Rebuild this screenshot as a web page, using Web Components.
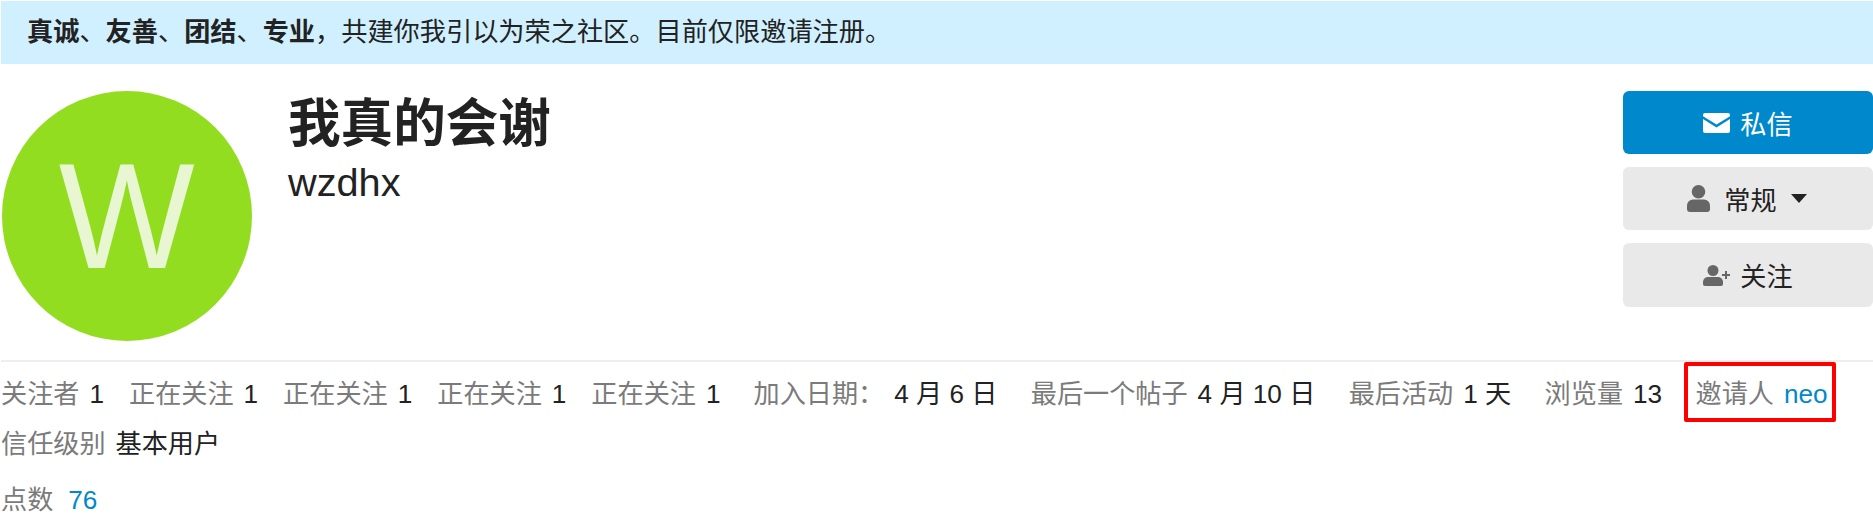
<!DOCTYPE html>
<html lang="zh">
<head>
<meta charset="utf-8">
<style>
  html, body { margin: 0; background: #fff; }
  body {
    width: 1873px;
    height: 524px;
    overflow: hidden;
    font-family: "Liberation Sans", "Noto Sans CJK SC", sans-serif;
    color: #222;
  }
</style>
</head>
<body>
<notice-banner><b>真诚</b>、<b>友善</b>、<b>团结</b>、<b>专业</b>，共建你我引以为荣之社区。目前仅限邀请注册。</notice-banner>
<user-header name="我真的会谢" username="wzdhx" letter="W"></user-header>
<user-stats></user-stats>

<script>
class NoticeBanner extends HTMLElement {
  constructor() {
    super();
    this.attachShadow({ mode: "open" });
    this.shadowRoot.innerHTML = `
      <style>
        :host {
          display: block;
          margin: 1px 0 0 1px;
          padding: 0 0 0 26px;
          height: 63px;
          line-height: 63px;
          background: #d1f0ff;
          font-size: 26.2px;
          color: #222;
        }
        ::slotted(b) { font-weight: bold; }
      </style>
      <slot></slot>`;
  }
}
customElements.define("notice-banner", NoticeBanner);

class ActionButton extends HTMLElement {
  constructor() {
    super();
    this.attachShadow({ mode: "open" });
    this.shadowRoot.innerHTML = `
      <style>
        :host {
          display: flex;
          align-items: center;
          justify-content: center;
          width: 250px;
          border-radius: 6px;
          background: #e9e9e9;
          color: #222;
          font-size: 26.15px;
          box-sizing: border-box;
        }
        :host([primary]) { background: #0088cc; color: #fff; }
        ::slotted(svg) { flex: none; }
      </style>
      <slot></slot>`;
  }
}
customElements.define("action-button", ActionButton);

class UserHeader extends HTMLElement {
  constructor() {
    super();
    this.attachShadow({ mode: "open" });
    this.shadowRoot.innerHTML = `
      <style>
        :host { display: flex; padding: 27px 0 0 2px; box-sizing: border-box; height: 296px; }
        .avatar {
          flex: none;
          width: 250px;
          height: 250px;
          border-radius: 50%;
          background: #92dd20;
          color: #e8f6d2;
          font-size: 150px;
          line-height: 250px;
          text-align: center;
        }
        .avatar span { display: inline-block; transform: scaleX(.96); }
        .names { flex: 1; padding: 0 0 0 36px; }
        h1 { margin: -2px 0 0; font-size: 52.6px; line-height: 70px; font-weight: bold; color: #222; }
        .username { font-size: 39.7px; line-height: 46px; color: #222; }
        .actions { flex: none; display: flex; flex-direction: column; gap: 13px; }
        .g { height: 63px; }
        .tall { height: 64px; }
        .lbl { margin-left: 10px; }
      </style>
      <div class="avatar"><span></span></div>
      <div class="names"><h1></h1><div class="username"></div></div>
      <div class="actions">
        <action-button primary class="g">
          <svg width="27" height="20" viewBox="0 0 27 20"><path fill="#fff" d="M2 0h23a2 2 0 0 1 2 2v1.200L13.500 11.600 0 3.200V2a2 2 0 0 1 2-2zM0 6l13.500 8.400L27 6v12a2 2 0 0 1-2 2H2a2 2 0 0 1-2-2z"/></svg>
          <span class="lbl">私信</span>
        </action-button>
        <action-button class="g">
          <svg width="23" height="27" viewBox="0 0 23 27"><circle cx="11.500" cy="6.800" r="6.800" fill="#666"/><path fill="#666" d="M6 14.500h11a6 6 0 0 1 6 6V24a3 3 0 0 1-3 3H3a3 3 0 0 1-3-3v-3.500a6 6 0 0 1 6-6z"/></svg>
          <span style="margin-left:14px">常规</span>
          <svg style="margin:0 2px 0 14px" width="16" height="9" viewBox="0 0 16 9"><path fill="#222" d="M0 0h16L8 9z"/></svg>
        </action-button>
        <action-button class="tall">
          <svg width="27" height="21" viewBox="0 0 27 21"><circle cx="10" cy="5.500" r="5.500" fill="#666"/><path fill="#666" d="M5 12h10a5 5 0 0 1 5 5v2a2 2 0 0 1-2 2H2a2 2 0 0 1-2-2v-2a5 5 0 0 1 5-5z"/><path fill="#666" d="M22 6h2v3h3v2h-3v3h-2v-3h-3V9h3z"/></svg>
          <span class="lbl">关注</span>
        </action-button>
      </div>`;
    this.shadowRoot.querySelector(".avatar span").textContent = this.getAttribute("letter");
    this.shadowRoot.querySelector("h1").textContent = this.getAttribute("name");
    this.shadowRoot.querySelector(".username").textContent = this.getAttribute("username");
  }
}
customElements.define("user-header", UserHeader);

class StatItem extends HTMLElement {
  constructor() {
    super();
    this.attachShadow({ mode: "open" });
    this.shadowRoot.innerHTML = `
      <style>
        :host { display: inline-flex; align-items: baseline; position: relative; gap: var(--item-gap, 10px); white-space: nowrap; line-height: 38px; }
        .k { color: #7b7b7b; }
        .v { color: #222; }
        :host([link]) .v { color: #0088cc; }
        :host([marked])::after {
          content: "";
          position: absolute;
          left: -12px;
          right: -8px;
          top: -13px;
          bottom: -9px;
          border: 4px solid #f00;
          border-radius: 2px;
        }
      </style>
      <span class="k"><slot name="k"></slot></span>
      <span class="v"><slot></slot></span>`;
  }
}
customElements.define("stat-item", StatItem);

class UserStats extends HTMLElement {
  constructor() {
    super();
    this.attachShadow({ mode: "open" });
    this.shadowRoot.innerHTML = `
      <style>
        :host {
          display: block;
          margin-left: 1px;
          border-top: 2px solid #eee;
          font-size: 26.15px;
          color: #222;
        }
        .row { display: flex; gap: 33px; }
        .group { display: flex; }
        .follow { gap: 25px; }
        .info { gap: 33.4px; }
        .r1 { margin-top: 13px; }
        .r2 { margin-top: 12px; }
        .r3 { margin-top: 18px; }
        .wide { --item-gap: 15px; }
      </style>
      <div class="row r1">
        <div class="group follow">
          <stat-item><span slot="k">关注者</span>1</stat-item>
          <stat-item><span slot="k">正在关注</span>1</stat-item>
          <stat-item><span slot="k">正在关注</span>1</stat-item>
          <stat-item><span slot="k">正在关注</span>1</stat-item>
          <stat-item><span slot="k">正在关注</span>1</stat-item>
        </div>
        <div class="group info">
          <stat-item><span slot="k">加入日期：</span>4 月 6 日</stat-item>
          <stat-item><span slot="k">最后一个帖子</span>4 月 10 日</stat-item>
          <stat-item><span slot="k">最后活动</span>1 天</stat-item>
          <stat-item><span slot="k">浏览量</span>13</stat-item>
          <stat-item link marked><span slot="k">邀请人</span>neo</stat-item>
        </div>
      </div>
      <div class="row r2"><stat-item><span slot="k">信任级别</span>基本用户</stat-item></div>
      <div class="row r3"><stat-item class="wide" link><span slot="k">点数</span>76</stat-item></div>`;
  }
}
customElements.define("user-stats", UserStats);
</script>
</body>
</html>
